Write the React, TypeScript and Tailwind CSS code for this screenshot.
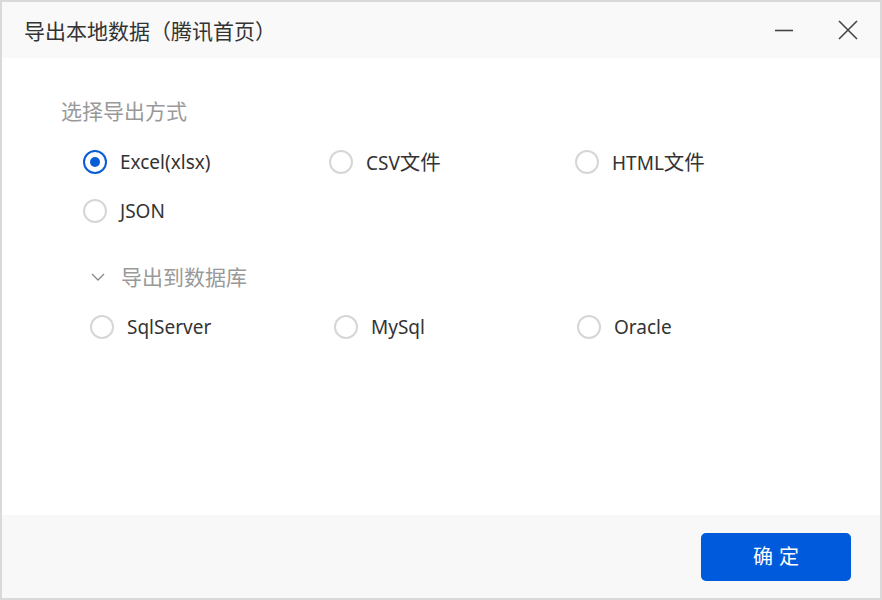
import { useState } from 'react';

const FONT = "font-['Noto_Sans','Noto_Sans_CJK_SC',sans-serif]";

type Option = { id: string; label: string; cjk?: string };

const fileOptions: Option[] = [
  { id: 'xlsx', label: 'Excel(xlsx)' },
  { id: 'csv', label: 'CSV', cjk: '文件' },
  { id: 'html', label: 'HTML', cjk: '文件' },
  { id: 'json', label: 'JSON' },
];

const dbOptions: Option[] = [
  { id: 'sqlserver', label: 'SqlServer' },
  { id: 'mysql', label: 'MySql' },
  { id: 'oracle', label: 'Oracle' },
];

function Radio({ checked, option, onClick }: { checked: boolean; option: Option; onClick: () => void }) {
  return (
    <button type="button" onClick={onClick} className="flex items-center gap-[13px] h-[24px] text-left">
      {checked ? (
        <span className="w-[24px] h-[24px] rounded-full border-2 border-[#0a5bd6] flex items-center justify-center">
          <span className="w-[10px] h-[10px] rounded-full bg-[#0a5bd6]" />
        </span>
      ) : (
        <span className="w-[24px] h-[24px] rounded-full border-2 border-[#d6d6d6]" />
      )}
      <span className="text-[19px] text-[#333] leading-none">
        {option.label}
        {option.cjk && <span className="text-[20.5px]">{option.cjk}</span>}
      </span>
    </button>
  );
}

export default function App() {
  const [selected, setSelected] = useState('xlsx');

  return (
    <div className={`${FONT} w-[882px] h-[600px] bg-white border-2 border-[#d9d9d9] flex flex-col`}>
      <div className="h-[56px] bg-[#f9f9f9] flex items-center justify-between pl-[22px] pr-[22px] pt-[3px] shrink-0">
        <span className="text-[21px] text-[#333] leading-none">导出本地数据（腾讯首页）</span>
        <div className="flex items-center gap-[44px] -mt-[3px]">
          <svg width="20" height="20" viewBox="0 0 20 20" className="text-[#444]">
            <line x1="1" y1="10.5" x2="19" y2="10.5" stroke="currentColor" strokeWidth="1.6" />
          </svg>
          <svg width="20" height="20" viewBox="0 0 20 20" className="text-[#444]">
            <path d="M1 1 L19 19 M19 1 L1 19" stroke="currentColor" strokeWidth="1.6" />
          </svg>
        </div>
      </div>

      <div className="flex-1 pl-[59px] pt-[43px]">
        <div className="text-[21px] text-[#999] leading-none">选择导出方式</div>
        <div className="grid grid-cols-[246px_246px_246px] gap-y-[25px] mt-[28px] pl-[22px]">
          {fileOptions.map((o) => (
            <Radio key={o.id} checked={selected === o.id} option={o} onClick={() => setSelected(o.id)} />
          ))}
        </div>
        <div className="flex items-center gap-[16px] mt-[42px] pl-[30px] h-[24px]">
          <svg width="14" height="14" viewBox="0 0 14 14" className="text-[#888]">
            <path d="M1 4 L7 10 L13 4" fill="none" stroke="currentColor" strokeWidth="1.3" />
          </svg>
          <span className="text-[21px] text-[#999] leading-none">导出到数据库</span>
        </div>
        <div className="grid grid-cols-[244px_243px_246px] mt-[26px] pl-[29px]">
          {dbOptions.map((o) => (
            <Radio key={o.id} checked={selected === o.id} option={o} onClick={() => setSelected(o.id)} />
          ))}
        </div>
      </div>

      <div className="h-[83px] bg-[#f8f8f8] flex items-center justify-end pr-[29px] shrink-0">
        <button type="button" className="w-[150px] h-[48px] rounded-[5px] bg-[#005bdc] text-white text-[20px] tracking-[6px] pl-[6px]">
          确定
        </button>
      </div>
    </div>
  );
}
